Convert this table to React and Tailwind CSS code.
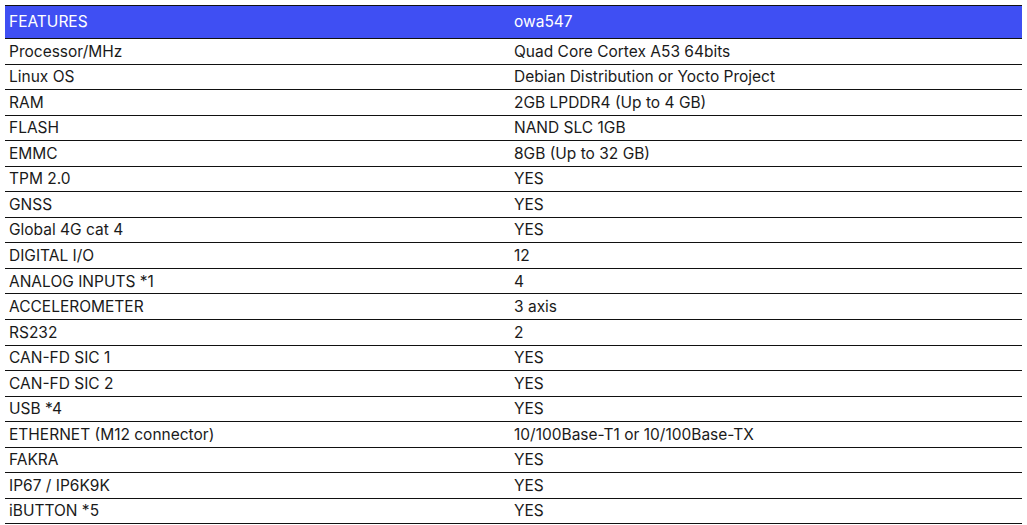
import React from "react";

const rows = [
  ["Processor/MHz", "Quad Core Cortex A53 64bits"],
  ["Linux OS", "Debian Distribution or Yocto Project"],
  ["RAM", "2GB LPDDR4 (Up to 4 GB)"],
  ["FLASH", "NAND SLC 1GB"],
  ["EMMC", "8GB (Up to 32 GB)"],
  ["TPM 2.0", "YES"],
  ["GNSS", "YES"],
  ["Global 4G cat 4", "YES"],
  ["DIGITAL I/O", "12"],
  ["ANALOG INPUTS *1", "4"],
  ["ACCELEROMETER", "3 axis"],
  ["RS232", "2"],
  ["CAN-FD SIC 1", "YES"],
  ["CAN-FD SIC 2", "YES"],
  ["USB *4", "YES"],
  ["ETHERNET (M12 connector)", "10/100Base-T1 or 10/100Base-TX"],
  ["FAKRA", "YES"],
  ["IP67 / IP6K9K", "YES"],
  ["iBUTTON *5", "YES"],
];

export default function App() {
  return (
    <div className="bg-white w-[1027px] h-[525px] overflow-hidden pt-[5px] pl-[5px] font-['Inter',sans-serif] text-[15.5px] text-[#1a1a1a]">
      <div className="w-[1017px] border-t border-[#111]">
        <div className="flex h-[33px] items-center bg-[#3f4ff3] text-white border-b-[1.5px] border-[#111]">
          <div className="w-[505px] pl-[4px]">FEATURES</div>
          <div className="flex-1 pl-[4px]">owa547</div>
        </div>
        {rows.map(([k, v]) => (
          <div key={k} className="flex h-[25.56px] items-center border-b-[1.5px] border-[#111]">
            <div className="w-[505px] pl-[4px]">{k}</div>
            <div className="flex-1 pl-[4px]">{v}</div>
          </div>
        ))}
      </div>
    </div>
  );
}
